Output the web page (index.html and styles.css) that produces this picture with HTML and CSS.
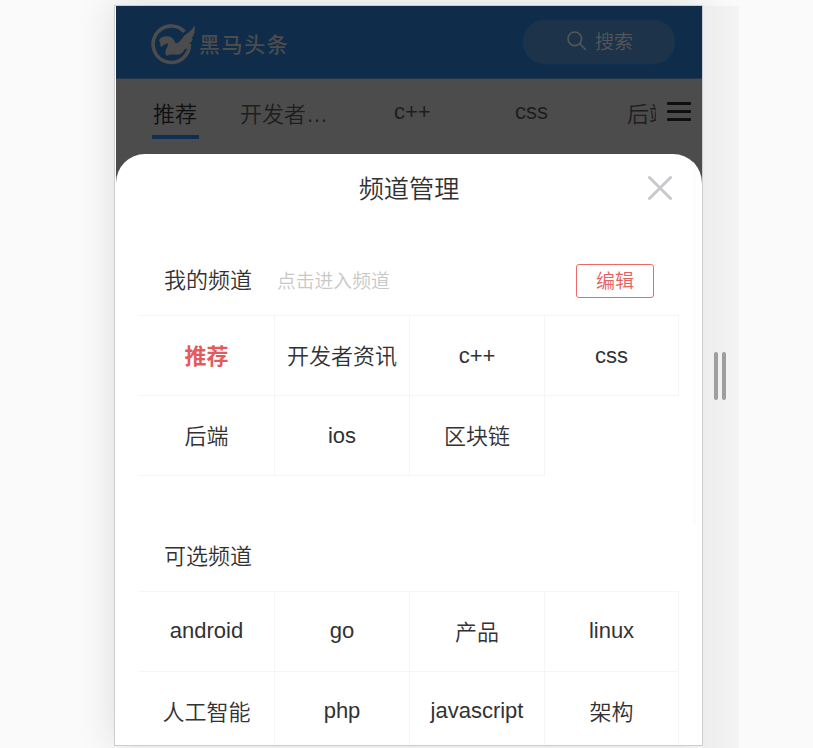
FILE: index.html
```
<!DOCTYPE html>
<html lang="zh-CN">
<head>
<meta charset="utf-8">
<title>频道管理</title>
<link rel="stylesheet" href="styles.css">
</head>
<body>
<div class="stage">
  <div class="phone">
    <header class="header">
      <div class="brand">
        <svg class="brand-mark" viewBox="0 0 46 44" width="46" height="44">
          <path d="M33.500 9.700A18.200 18.200 0 1 0 38.500 22" fill="none" stroke="#4c4c4c" stroke-width="3.600"/>
          <path d="M8 18.500C9 15.500 12 14.300 16 14.300C20.500 14.500 22.800 17 23.800 20C24.500 21.500 25.500 21.600 27 20.800C29.500 19.500 30.500 16.500 33.500 13.500C37.500 10.500 41.500 7.500 43.700 3.500C44.300 8 43.500 13 40.500 16.500L42 17C41 19.500 40 20.500 38 21.500L39.500 22C38.500 25 36 26.500 33.500 27.500C31.500 32 28 33.200 24 32.600C20.500 32.200 18 32.500 15.800 34C14.200 32 14 29.500 15 27.500C16.200 25.300 17.500 23 16.500 21C15 23 13 21.800 10.700 25C8.800 24 9.800 20.800 8 18.500Z" fill="#4c4c4c"/>
        </svg>
        <span class="brand-name">黑马头条</span>
      </div>
      <div class="search">
        <svg viewBox="0 0 20 20" width="20" height="20" fill="none" stroke="#545658" stroke-width="1.6">
          <circle cx="7.800" cy="7.800" r="6.800"/><path d="M12.600 12.600L19 19"/>
        </svg>
        <span>搜索</span>
      </div>
    </header>
    <nav class="tabs">
      <div class="tab tab-first active">推荐</div>
      <div class="tab tab-second">开发者…</div>
      <div class="tab tab-third latin">c++</div>
      <div class="tab tab-fourth latin">css</div>
      <div class="tab tab-last">后端</div>
      <div class="menu"><i></i><i></i><i></i></div>
    </nav>
    <main class="sheet-wrap">
      <div class="sheet">
        <div class="scrollbar"></div>
        <div class="sheet-title">
          <h1>频道管理</h1>
          <svg class="close" viewBox="0 0 24 24" width="24" height="24"><path d="M1.500 1.500L22.500 22.500M22.500 1.500L1.500 22.500" stroke="#c8c9cc" stroke-width="3" stroke-linecap="round"/></svg>
        </div>
        <div class="section-head">
          <h2>我的频道</h2><span class="hint">点击进入频道</span><button class="edit">编辑</button>
        </div>
        <div class="grid">
          <div class="cell current">推荐</div><div class="cell">开发者资讯</div><div class="cell latin">c++</div><div class="cell latin">css</div>
          <div class="cell">后端</div><div class="cell latin">ios</div><div class="cell">区块链</div>
        </div>
        <div class="section-head optional"><h2>可选频道</h2></div>
        <div class="grid optional-grid">
          <div class="cell latin">android</div><div class="cell latin">go</div><div class="cell">产品</div><div class="cell latin">linux</div>
          <div class="cell">人工智能</div><div class="cell latin">php</div><div class="cell latin">javascript</div><div class="cell">架构</div>
        </div>
      </div>
    </main>
  </div>
  <div class="resizer"><i></i><i></i></div>
</div>
</body>
</html>
```

FILE: styles.css
```
* { box-sizing: border-box; }
body {
  margin: 0;
  background: #fafafa;
  color: #323233;
  font: 350 22px "Liberation Sans", "Noto Sans CJK SC", sans-serif;
  overflow: hidden;
}
.stage {
  display: flex;
  height: 748px;
  padding: 5px 0 0 114px;
}
.phone {
  display: flex;
  flex-direction: column;
  flex: none;
  width: 589px;
  height: 741px;
  border: 1px solid #cbcdce;
  padding-left: 1px;
  background: #fff;
  box-shadow: 0 0 36px rgba(0, 0, 0, .12);
  overflow: hidden;
}
.header {
  display: flex;
  justify-content: space-between;
  flex: none;
  height: 73px;
  padding: 13px 26px 0 35px;
  background: #0f2c4b;
  border-bottom: 1px solid #24384c;
}
.brand { display: flex; padding-top: 3px; }
.brand-mark { flex: none; }
.brand-name {
  margin-left: 2px;
  line-height: 45px;
  font-size: 21px;
  font-weight: 500;
  letter-spacing: 1.6px;
  color: #4c4c4c;
}
.search {
  display: flex;
  justify-content: center;
  gap: 8px;
  width: 154px;
  height: 46px;
  padding: 11px 0 0 2px;
  border: 1px solid #0f2f51;
  border-radius: 23px;
  background: #1d3349;
  color: #545658;
  font-size: 19px;
  line-height: 24px;
}
.tabs {
  display: flex;
  flex: none;
  height: 75px;
  padding: 0 11px 0 36px;
  background: #4c4c4c;
  color: #1e1e1f;
  line-height: 71px;
}
.tab { flex: none; height: 60px; white-space: nowrap; overflow: hidden; }
.tab-first { width: 47px; padding-left: 1px; }
.tab-second { width: 92px; margin-left: 41px; }
.tab-third { width: 40px; margin-left: 62px; }
.tab-fourth { width: 36px; margin-left: 81px; }
.tab-last { width: 29px; margin-left: 76px; }
.tabs .latin { line-height: 66px; }
.active {
  color: #0f0f10;
  border-bottom: 4px solid #0f2f52;
}
.menu {
  display: flex;
  flex-direction: column;
  gap: 5px;
  width: 24px;
  margin-left: auto;
  padding-top: 23px;
}
.menu i { height: 3px; border-radius: 1px; background: #0f0f10; }
.sheet-wrap { flex: 1; min-height: 0; background: #4c4c4c; }
.sheet {
  position: relative;
  height: 100%;
  overflow: hidden;
  border-radius: 29px 29px 0 0;
  background: #fff;
}
.scrollbar {
  position: absolute;
  top: 0;
  right: 6px;
  width: 3px;
  height: 370px;
  background: #fcfcfc;
}
.sheet-title {
  display: grid;
  grid-template-columns: 1fr auto 1fr;
  align-items: center;
  height: 69px;
  padding: 0 30px 2px;
}
h1, h2 { margin: 0; font-weight: 350; }
h1 { grid-column: 2; padding-bottom: 2px; font-size: 25.200px; }
h2 { padding-bottom: 5px; font-size: 22px; }
.close { justify-self: end; }
.section-head {
  display: flex;
  align-items: center;
  height: 92px;
  padding: 23px 49px 0 48px;
}
.hint { margin-left: 25px; padding-bottom: 2px; color: #c8c8c8; font-size: 18.800px; }
.edit {
  width: 78px;
  height: 34px;
  margin-left: auto;
  margin-right: -1px;
  padding: 1px 0 0;
  border: 1px solid #ee6a6a;
  border-radius: 3px;
  background: #fff;
  color: #e66060;
  font: inherit;
  font-size: 19px;
  line-height: 31px;
}
.grid {
  display: grid;
  grid-template-columns: 136px 135px 135px 134px;
  grid-auto-rows: 80px;
  width: 540px;
  margin-left: 23px;
  border-top: 1px solid #f4f5f5;
}
.cell {
  border-right: 1px solid #f4f5f5;
  border-bottom: 1px solid #f4f5f5;
  text-align: center;
  line-height: 82px;
}
.cell.latin { line-height: 79px; }
.optional-grid .cell.latin { line-height: 78px; }
.current { color: #e45b5b; font-weight: 700; }
.optional { height: 115px; padding-top: 46px; }
.resizer {
  display: flex;
  align-items: center;
  justify-content: center;
  gap: 4px;
  width: 36px;
  height: 742px;
  margin-top: 1px;
  padding: 0 2px 2px 0;
  background: linear-gradient(90deg, #ededed, #f4f4f4);
}
.resizer i { width: 4px; height: 48px; border-radius: 2px; background: #9e9e9e; }
```
